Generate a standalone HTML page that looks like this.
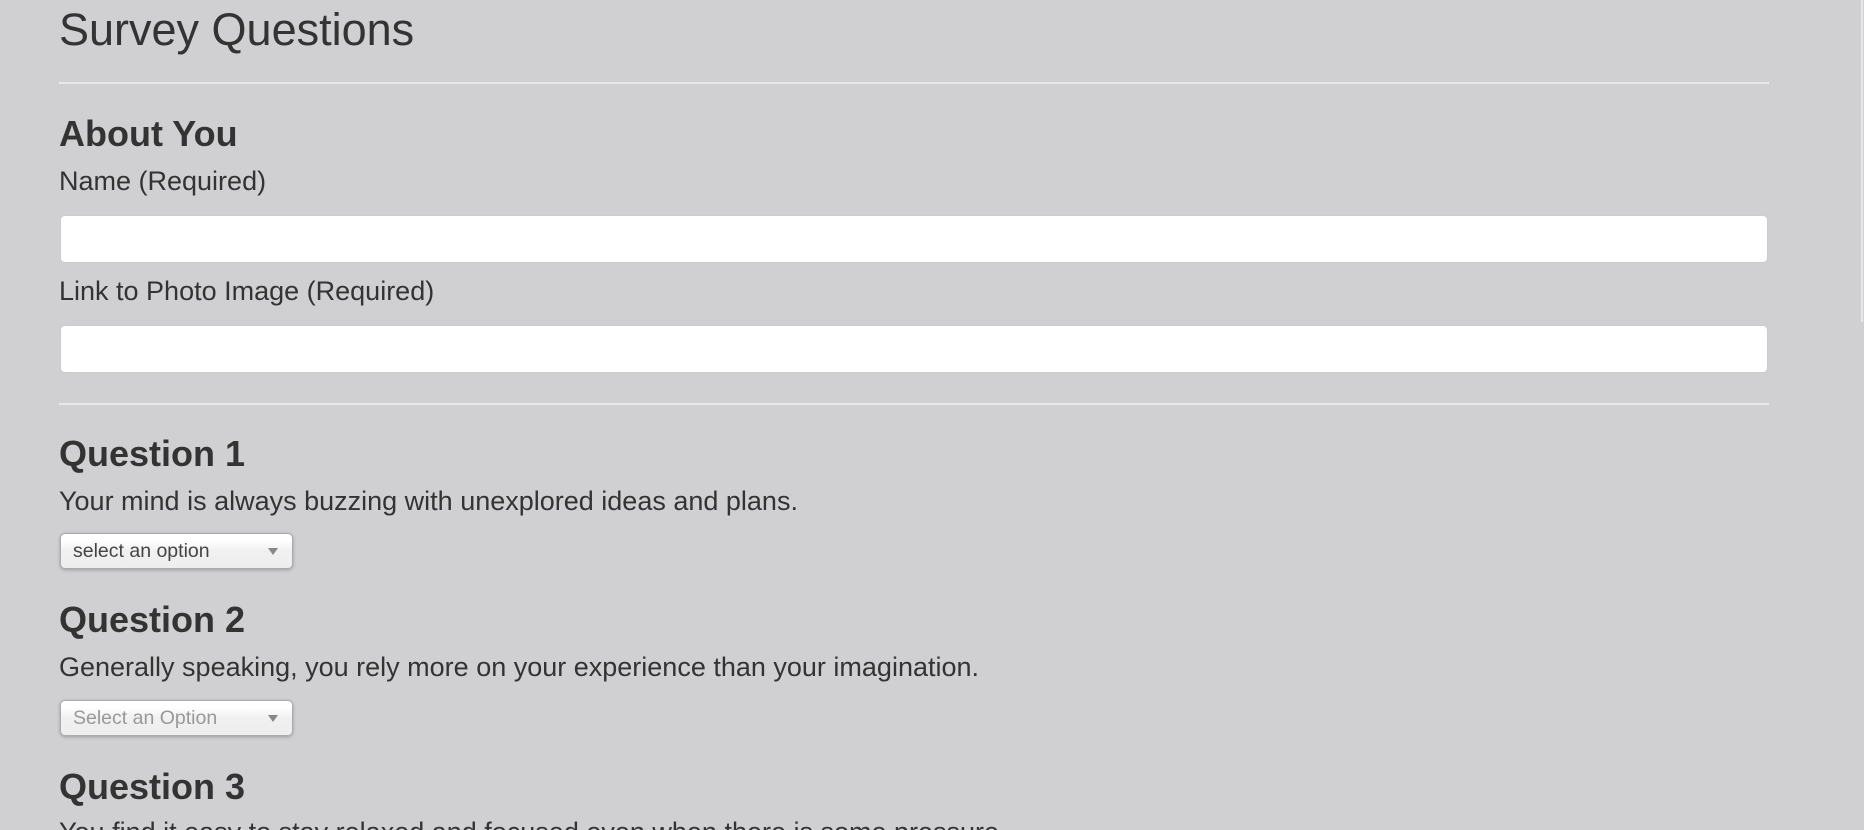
<!DOCTYPE html>
<html style="overflow:hidden;height:830px;width:1864px"><head><style>
html,body{margin:0;padding:0}
body{width:1864px;height:830px;overflow:hidden;background:#d0d0d2;font-family:"Liberation Sans",Arial,sans-serif;color:#333;position:relative}
.a{position:absolute;left:59px;white-space:nowrap}
.h1{font-size:45px;line-height:1}
.h3{font-size:36px;font-weight:bold;line-height:1}
.t{font-size:27px;line-height:1}
.l{font-size:27px;line-height:1}
.hr{position:absolute;left:59px;width:1710px;height:2px;background:#e8e8e8}
.in{position:absolute;left:60px;width:1706px;height:46px;background:#fff;border:1px solid #ccc;border-radius:5px}
.sel{position:absolute;left:60px;height:34px;border:1px solid #aaa;border-radius:5px;background:linear-gradient(#fff 20%,#f0f0f0 50%,#eee);box-shadow:0 1px 3px rgba(0,0,0,.25);font-size:19.5px;line-height:34px;padding-left:12px;box-sizing:content-box;width:219px}
.sel:after{content:"";position:absolute;right:14px;top:14px;border-left:5px solid transparent;border-right:5px solid transparent;border-top:7px solid #888}
.sb{position:absolute;left:1861px;top:0;width:2px;height:322px;background:#e8e8e8}
</style></head><body>
<div class="a h1" style="top:7px">Survey Questions</div>
<div class="hr" style="top:82px"></div>
<div class="a h3" style="top:116px">About You</div>
<div class="a l" style="top:168px">Name (Required)</div>
<div class="in" style="top:215px"></div>
<div class="a l" style="top:278px">Link to Photo Image (Required)</div>
<div class="in" style="top:325px"></div>
<div class="hr" style="top:403px"></div>
<div class="a h3" style="top:436px">Question 1</div>
<div class="a t" style="top:488px">Your mind is always buzzing with unexplored ideas and plans.</div>
<div class="sel" style="top:533px;color:#444">select an option</div>
<div class="a h3" style="top:602px">Question 2</div>
<div class="a t" style="top:654px">Generally speaking, you rely more on your experience than your imagination.</div>
<div class="sel" style="top:700px;color:#999">Select an Option</div>
<div class="a h3" style="top:769px">Question 3</div>
<div class="a t" style="top:819px">You find it easy to stay relaxed and focused even when there is some pressure.</div>
<div class="sb"></div>
</body></html>
